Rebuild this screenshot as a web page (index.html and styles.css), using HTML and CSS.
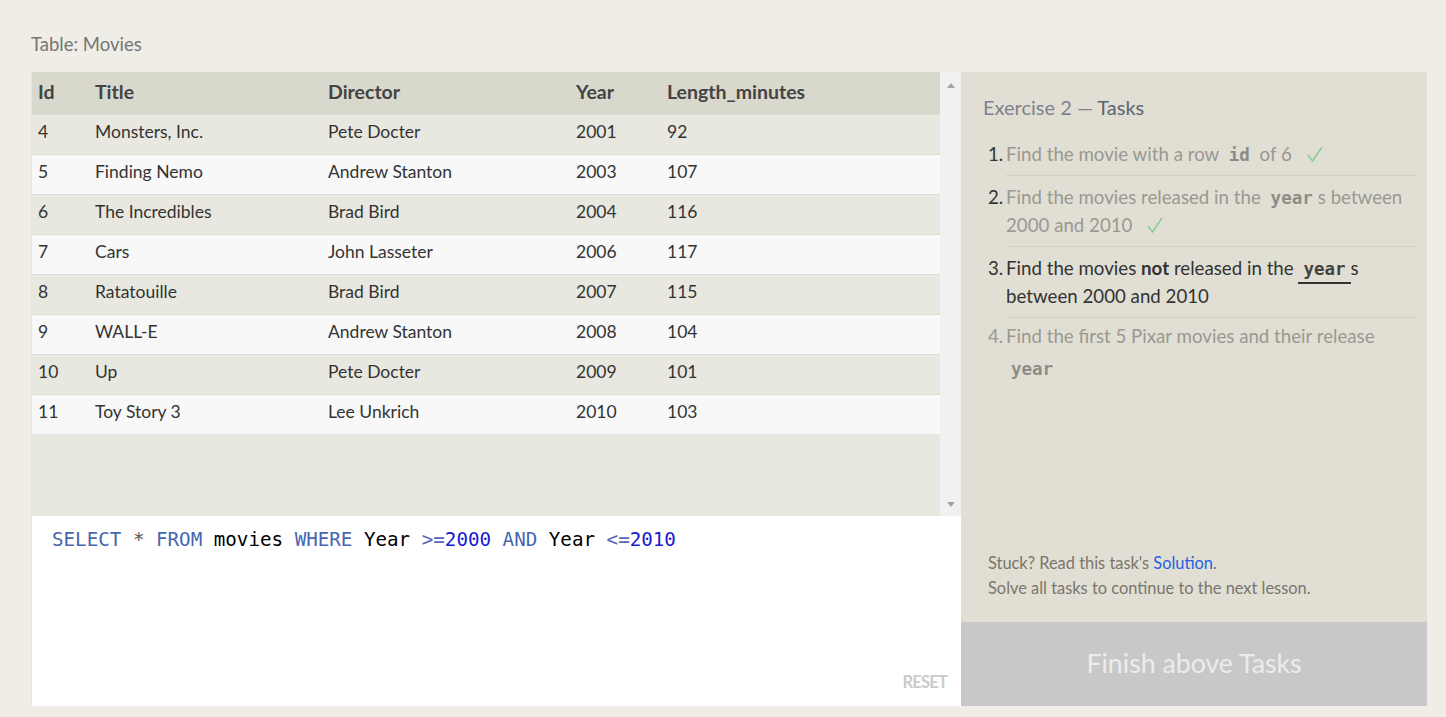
FILE: index.html
```html
<!DOCTYPE html>
<html>
<head>
<meta charset="utf-8">
<link rel="stylesheet" href="styles.css">
</head>
<body>
<div class="page">
  <div class="caption">Table: Movies</div>
  <div class="workspace">
    <div class="left">
      <div class="table-area">
        <div class="table-scroll">
          <table class="movies">
            <thead>
              <tr><th class="c-id">Id</th><th class="c-title">Title</th><th class="c-dir">Director</th><th class="c-year">Year</th><th class="c-len">Length_minutes</th></tr>
            </thead>
            <tbody>
              <tr><td>4</td><td>Monsters, Inc.</td><td>Pete Docter</td><td>2001</td><td>92</td></tr>
              <tr><td>5</td><td>Finding Nemo</td><td>Andrew Stanton</td><td>2003</td><td>107</td></tr>
              <tr><td>6</td><td>The Incredibles</td><td>Brad Bird</td><td>2004</td><td>116</td></tr>
              <tr><td>7</td><td>Cars</td><td>John Lasseter</td><td>2006</td><td>117</td></tr>
              <tr><td>8</td><td>Ratatouille</td><td>Brad Bird</td><td>2007</td><td>115</td></tr>
              <tr><td>9</td><td>WALL-E</td><td>Andrew Stanton</td><td>2008</td><td>104</td></tr>
              <tr><td>10</td><td>Up</td><td>Pete Docter</td><td>2009</td><td>101</td></tr>
              <tr><td>11</td><td>Toy Story 3</td><td>Lee Unkrich</td><td>2010</td><td>103</td></tr>
            </tbody>
          </table>
        </div>
        <div class="scrollbar">
          <span class="arrow up"></span>
          <span class="arrow down"></span>
        </div>
      </div>
      <div class="editor">
        <div class="code"><span class="kw">SELECT</span> <span class="star">*</span> <span class="kw">FROM</span> movies <span class="kw">WHERE</span> Year <span class="op">&gt;=</span><span class="num">2000</span> <span class="kw">AND</span> Year <span class="op">&lt;=</span><span class="num">2010</span></div>
        <div class="reset">RESET</div>
      </div>
    </div>
    <div class="right">
      <div class="tasks">
        <h2 class="tasks-title"><span class="ex">Exercise 2 —</span> Tasks</h2>
        <ol class="task-list">
          <li class="task done"><span class="tnum">1.</span><div class="ttext">Find the movie with a row <code>id</code> of 6 <svg class="check" viewBox="0 0 16 16" width="16" height="16"><polyline points="1,9 5.5,15 15,1" fill="none" stroke="#82cd90" stroke-width="1.4"/></svg></div></li>
          <li class="task done"><span class="tnum">2.</span><div class="ttext">Find the movies released in the <code>year</code>s between 2000 and 2010 <svg class="check" viewBox="0 0 16 16" width="16" height="16"><polyline points="1,9 5.5,15 15,1" fill="none" stroke="#82cd90" stroke-width="1.4"/></svg></div></li>
          <li class="task active"><span class="tnum">3.</span><div class="ttext">Find the movies <b>not</b> released in the <code>year</code>s between 2000 and 2010</div></li>
          <li class="task todo"><span class="tnum">4.</span><div class="ttext last">Find the first 5 Pixar movies and their release <code>year</code></div></li>
        </ol>
        <div class="help">
          <p>Stuck? Read this task's <a href="#">Solution</a>.</p>
          <p>Solve all tasks to continue to the next lesson.</p>
        </div>
      </div>
      <div class="finish">Finish above Tasks</div>
    </div>
  </div>
</div>
</body>
</html>
```

FILE: styles.css
```css
* { box-sizing: border-box; }
html, body { margin: 0; padding: 0; }
body {
  background: #efede5;
  font-family: Lato, "Noto Sans", sans-serif;
  color: #333;
}
.page {
  padding: 0 19px 0 31px;
}
.caption {
  height: 72px;
  padding-top: 33px;
  line-height: 22px;
  font-size: 18.5px;
  color: #757575;
}
.workspace {
  display: flex;
  height: 634px;
}
.left {
  width: 930px;
  display: flex;
  flex-direction: column;
  border-left: 1px solid #e6e4dc;
}
.table-area {
  height: 444px;
  display: flex;
  background: #e9e8e0;
}
.table-scroll {
  flex: 1;
}
.movies {
  width: 100%;
  border-collapse: collapse;
  font-size: 17.5px;
  table-layout: fixed;
}
.movies th {
  height: 42px;
  background: #d9d8cd;
  text-align: left;
  font-weight: 700;
  color: #444;
  padding: 0 6px 2px;
  font-size: 19.5px;
}
.c-id { width: 57px; }
.c-title { width: 233px; }
.c-dir { width: 248px; }
.c-year { width: 91px; }
.movies td {
  height: 40px;
  padding: 0 6px 5px;
  border-top: 1px solid #deddd5;
  color: #333;
}
.movies tbody tr:nth-child(odd) td { background: #e9e8e0; }
.movies tbody tr:nth-child(even) td { background: #f8f8f8; }
.scrollbar {
  width: 21px;
  background: #f1f1f1;
  display: flex;
  flex-direction: column;
  justify-content: space-between;
  align-items: center;
  padding: 11px 0 9px;
}
.arrow {
  width: 0;
  height: 0;
  border-left: 4px solid transparent;
  border-right: 4px solid transparent;
}
.arrow.up { border-bottom: 5px solid #a3a3a3; }
.arrow.down { border-top: 5px solid #a3a3a3; }
.editor {
  flex: 1;
  background: #fff;
  display: flex;
  flex-direction: column;
  justify-content: space-between;
  padding: 12px 14px 14px 20px;
}
.code {
  font-family: "DejaVu Sans Mono", "Liberation Mono", monospace;
  font-size: 19.2px;
  line-height: 24px;
  color: #000;
  white-space: pre;
}
.kw { color: #4866b0; }
.star { color: #555; }
.op { color: #5566b8; }
.num { color: #1a1ad0; }
.reset {
  align-self: flex-end;
  font-size: 16.5px;
  font-weight: 700;
  color: #cbcbcb;
  letter-spacing: -0.8px;
  line-height: 20px;
}
.right {
  width: 466px;
  display: flex;
  flex-direction: column;
}
.tasks {
  flex: 1;
  background: #e1dfd4;
  padding: 22px 10px 22px 22px;
  display: flex;
  flex-direction: column;
}
.tasks-title {
  margin: 0;
  font-weight: 400;
  font-size: 20px;
  line-height: 26px;
  color: #5d6372;
}
.tasks-title .ex { color: #7d8290; }
.task-list {
  list-style: none;
  margin: 20px 0 0 5px;
  padding: 0;
}
.task {
  display: flex;
  align-items: flex-start;
  font-size: 18.7px;
  line-height: 28px;
}
.tnum {
  width: 18px;
  flex: none;
  color: #333;
}
.ttext {
  flex: 1;
  padding: 7px 0 7px;
  border-bottom: 1px solid #d2d0c6;
}
.task:first-child .ttext { padding-top: 0; }
.task:not(:first-child) .tnum { padding-top: 7px; }
.ttext.last { border-bottom: none; padding-top: 4px; }
.task.todo .tnum { padding-top: 4px !important; }
.task.done .ttext, .task.todo .ttext, .task.todo .tnum { color: #9a9891; }
.task.active .ttext { color: #333; }
.task code {
  font-family: "DejaVu Sans Mono", "Liberation Mono", monospace;
  font-weight: 700;
  font-size: 17.5px;
  line-height: 0;
  padding: 0 5px;
  color: #8e8c86;
}
.task.active code {
  color: #444;
  border-bottom: 2px solid #333;
  padding-bottom: 3px;
}
.task.todo code {
  display: inline-block;
  line-height: 28px;
  margin-top: 5px;
}
.check {
  margin-left: 10px;
  vertical-align: -1px;
}
.help {
  margin-top: auto;
  padding-left: 5px;
  font-size: 16.4px;
  line-height: 25px;
  color: #7a756e;
}
.help p { margin: 0; }
.help a { color: #1f62e0; text-decoration: none; }
.finish {
  height: 84px;
  background: #c8c8c8;
  color: #ececec;
  font-size: 26.7px;
  display: flex;
  align-items: center;
  justify-content: center;
  padding-bottom: 3px;
}
```
